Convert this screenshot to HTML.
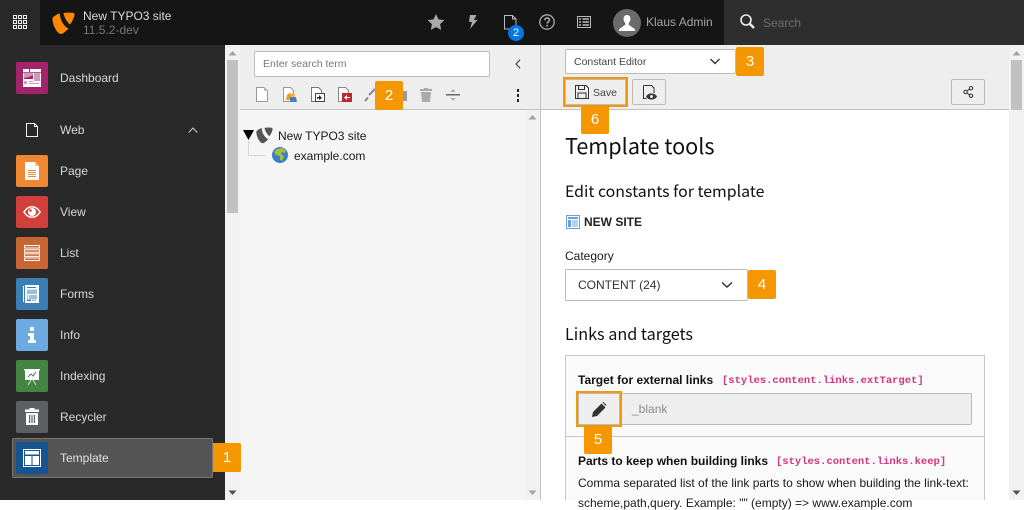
<!DOCTYPE html>
<html><head><meta charset="utf-8"><style>
*{box-sizing:border-box}
html,body{margin:0;padding:0;width:1024px;height:500px;overflow:hidden;background:#fff;font-family:"Liberation Sans",sans-serif;font-size:12px;color:#1a1a1a}
.a{position:absolute}
.t{position:absolute;white-space:nowrap;line-height:14px}
.ic{position:absolute;width:32px;height:32px;border-radius:2px}
.m{position:absolute;left:60px;color:#d8d8d8;font-size:12px;line-height:14px;white-space:nowrap}
.n{position:absolute;width:28px;height:29px;background:#f59700;color:#fff;font-size:15px;line-height:29px;text-align:center;border-radius:2px;z-index:5}
svg{position:absolute;overflow:visible}
.btn{position:absolute;background:#eee;border:1px solid #bbb;border-radius:2px}
.mono{font-family:"Liberation Mono",monospace;font-weight:bold;font-size:10.5px;color:#d63384;white-space:nowrap;position:absolute;line-height:12px}
.b{font-weight:bold}
.h{font-family:'Noto Sans CJK JP',sans-serif;color:#111}
</style></head><body>

<!-- top bar -->
<div class="a" style="left:0;top:0;width:1024px;height:45px;background:#151515"></div>
<div class="a" style="left:0;top:0;width:40px;height:45px;background:#292929"></div>
<svg style="left:13px;top:15px" width="14" height="14" fill="none" stroke="#eee" stroke-width="1"><path d="M.5.500h3v3h-3zM5.500.5h3v3h-3zM10.500.5h3v3h-3zM.5 5.500h3v3h-3zM5.500 5.500h3v3h-3zM10.500 5.500h3v3h-3zM.5 10.500h3v3h-3zM5.500 10.500h3v3h-3zM10.500 10.500h3v3h-3z"/></svg>
<svg style="left:52px;top:12px" width="23" height="23" viewBox="0 0 23 23"><path d="M.5 6C2 4 5 2 8 1.500 7.500 6 11 14 16.500 16.500 14 19 11 22 9 22 5 22 0 12 .5 6z" fill="#f80"/><path d="M11.500 1C15 .5 19 .5 22 1l.5 2C22 6 20 10 18 12.500 15 10 12 5 11.500 1z" fill="#f80"/></svg>
<div class="t" style="left:83px;top:9px;color:#dcdcdc">New TYPO3 site</div>
<div class="t" style="left:83px;top:23px;color:#777">11.5.2-dev</div>

<svg style="left:427px;top:13px" width="18" height="18" viewBox="0 0 18 18"><path d="M9 1l2.500 5.400 5.900.7-4.300 4 1.100 5.800L9 14.100l-5.200 2.800 1.100-5.800-4.300-4 5.900-.7z" fill="#aaa"/></svg>
<svg style="left:467px;top:14px" width="12" height="16" viewBox="0 0 12 16"><path d="M3 1h6.500L7 6h3.500L3 15l2-7H2z" fill="#aaa"/></svg>
<svg style="left:504px;top:15px" width="13" height="15" fill="none" stroke="#bbb"><path d="M.5.500h8l3.500 3.500v10H.5zM8.500.5v3.500h3.500"/></svg>
<div class="a" style="left:508px;top:25px;width:16px;height:16px;border-radius:8px;background:#0078e6;color:#fff;font-size:11px;line-height:16px;text-align:center">2</div>
<svg style="left:539px;top:14px" width="16" height="16" viewBox="0 0 16 16" fill="none" stroke="#aaa" stroke-width="1.300"><circle cx="8" cy="8" r="7.200"/><path d="M5.800 6.200c0-3 4.600-3 4.600-.2 0 1.700-2.200 1.800-2.200 3.500" stroke-width="1.600"/><path d="M8.200 10.800v1.700" stroke-width="1.800"/></svg>
<svg style="left:577px;top:16px" width="14" height="12" fill="none" stroke="#bbb"><path d="M.5.500h13v11H.5z"/><path d="M2 3h2M5.500 3H12M2 6h2M5.500 6H12M2 9h2M5.500 9H12" stroke-width="1.500"/></svg>
<svg style="left:613px;top:9px" width="28" height="28" viewBox="0 0 28 28"><circle cx="14" cy="14" r="14" fill="#6b6b6b"/><path d="M14 6c-2.500 0-3.600 1.800-3.400 4.300.1 1.600.8 3 1.700 3.800v1.700L6 20.200V22h16v-1.800l-6.300-4.400v-1.700c.9-.8 1.600-2.200 1.700-3.800C17.600 7.800 16.500 6 14 6z" fill="#fff"/></svg>
<div class="t" style="left:646px;top:15px;color:#a5a5a5">Klaus Admin</div>
<div class="a" style="left:724px;top:0;width:300px;height:45px;background:#2e2e2e"></div>
<svg style="left:740px;top:14px" width="15" height="15" fill="none" stroke="#eee"><circle cx="6" cy="6" r="5" stroke-width="1.600"/><path d="M9.500 9.500l4.500 4.500" stroke-width="2.400"/></svg>
<div class="t" style="left:763px;top:16px;color:#6f6f6f">Search</div>

<!-- sidebar -->
<div class="a" style="left:0;top:45px;width:225px;height:455px;background:#292929"></div>
<div class="a" style="left:225px;top:45px;width:15px;height:455px;background:#f1f1f1"></div>
<div class="a" style="left:227px;top:60px;width:11px;height:153px;background:#c1c1c1"></div>
<svg style="left:228px;top:51px" width="9" height="5"><path d="M4.500 0L8.500 4.500H.5z" fill="#a3a3a3"/></svg>
<svg style="left:228px;top:490px" width="9" height="5"><path d="M4.500 5L8.500 .5H.5z" fill="#505050"/></svg>

<div class="ic" style="left:16px;top:62px;background:#a3246a"></div>
<svg style="left:23px;top:69px" width="18" height="18"><path d="M0 0h18v18H0z" fill="#fff"/><path d="M1 4h9v6H1zM11 4h6v8h-6zM1 12h3v3H1zM6 12h4v1H6zM6 14h10v1H6z" fill="#d29ab9"/><path d="M6 0h1v3H6zM0 3h18v.7H0zM1 9l5-1 4-2v4H1z" fill="#a3246a"/></svg>
<div class="m" style="top:71px">Dashboard</div>

<svg style="left:26px;top:123px" width="12" height="14" fill="none" stroke="#f0f0f0"><path d="M.5.500h8l3 3v10H.5zM8.500.5v3h3"/></svg>
<div class="m" style="top:123px">Web</div>
<svg style="left:188px;top:127px" width="10" height="6" fill="none" stroke="#c8c8c8" stroke-width="1.100"><path d="M.7 5.500L5 1l4.300 4.500"/></svg>

<div class="ic" style="left:16px;top:155px;background:#f08833"></div>
<svg style="left:25px;top:162px" width="14" height="18"><path d="M0 0h10l4 4v14H0z" fill="#fff"/><path d="M10 0l4 4h-4z" fill="#f8c49a"/><path d="M3 8h8v1H3zM3 10h8v1H3zM3 12h8v1H3zM3 14h8v1H3z" fill="#f08833"/></svg>
<div class="m" style="top:164px">Page</div>

<div class="ic" style="left:16px;top:196px;background:#d1403a"></div>
<svg style="left:23px;top:206px" width="18" height="12"><path d="M0 6C3 1.500 6 0 9 0s6 1.500 9 6c-3 4.500-6 6-9 6S3 10.500 0 6z" fill="#fff"/><path d="M1.800 6C4 3 6 1.500 9 1.500S14 3 16.200 6C14 9 12 10.500 9 10.500S4 9 1.800 6z" fill="#d1403a"/><circle cx="9" cy="6" r="4" fill="#fff"/><circle cx="7.500" cy="4.500" r="1.300" fill="#d1403a"/></svg>
<div class="m" style="top:205px">View</div>

<div class="ic" style="left:16px;top:237px;background:#c96533"></div>
<svg style="left:24px;top:245px" width="16" height="16" fill="none" stroke="#fff"><path d="M.5.500h15v2.500H.5zM.5 4.700h15v2.500H.5zM.5 8.900h15v2.500H.5zM.5 13h15v2.500H.5z"/></svg>
<div class="m" style="top:246px">List</div>

<div class="ic" style="left:16px;top:278px;background:#3b7fb5"></div>
<svg style="left:23px;top:285px" width="16" height="18"><path d="M0 1h1v16H0zM2 0h14v18H2z" fill="#fff"/><path d="M4 4.500h10V9H4z" fill="#9cc0dc"/><path d="M4 2h9v1H4zM4 10.500h1v1H4zM6 10.500h8v1H6zM4 12.500h1v1H4zM6 12.500h8v1H6z" fill="#3b7fb5"/><path d="M4 14.500h4V16H4z" fill="#3b7fb5"/><path d="M9 14.500h4V16H9z" fill="#9cc0dc"/></svg>
<div class="m" style="top:287px">Forms</div>

<div class="ic" style="left:16px;top:319px;background:#6daae0"></div>
<svg style="left:28px;top:327px" width="8" height="16"><path d="M2 0h4v4H2zM0 6h6v7h2v3H0v-3h2V9H0z" fill="#fff"/></svg>
<div class="m" style="top:328px">Info</div>

<div class="ic" style="left:16px;top:360px;background:#468444"></div>
<svg style="left:24px;top:369px" width="16" height="16"><path d="M0 0h16v1.500H0zM1 1.500h14V11H1z" fill="#fff"/><path d="M4 8l3-3 2 2 3-4" stroke="#468444" fill="none"/><path d="M7 11L4 16M9 11l3 5" stroke="#cfe0ce" fill="none"/></svg>
<div class="m" style="top:369px">Indexing</div>

<div class="ic" style="left:16px;top:401px;background:#5a6063"></div>
<svg style="left:25px;top:408px" width="14" height="17"><path d="M4.500 0h5v1.500H14V4H0V1.500h4.500zM1 5h12v12H1z" fill="#fff"/><path d="M4 7h1.200v8H4zM6.400 7h1.200v8H6.400zM8.800 7H10v8H8.800z" fill="#5a6063"/></svg>
<div class="m" style="top:410px">Recycler</div>

<div class="a" style="left:12px;top:438px;width:201px;height:40px;background:#555;border:1px solid #777;border-radius:2px"></div>
<div class="ic" style="left:16px;top:442px;background:#145591"></div>
<svg style="left:23px;top:449px" width="18" height="18" fill="none" stroke="#fff"><path d="M.5.500h17v17H.5z"/><path d="M2 2h14v3.500H2zM2 7h6.500v9H2zM9.500 7H16v9H9.500z" fill="#fff" stroke="none"/></svg>
<div class="m" style="top:451px;color:#e0e0e0">Template</div>
<div class="n" style="left:213px;top:443px;border-radius:0 2px 2px 0">1</div>

<!-- tree panel -->
<div class="a" style="left:240px;top:45px;width:300px;height:65px;background:#eee;border-bottom:1px solid #c3c3c3"></div>
<div class="a" style="left:240px;top:110px;width:285px;height:390px;background:#f5f5f5"></div>
<div class="a" style="left:525px;top:110px;width:15px;height:390px;background:#f1f1f1"></div>
<div class="a" style="left:540px;top:45px;width:1px;height:455px;background:#c3c3c3"></div>
<svg style="left:528px;top:115px" width="9" height="5"><path d="M4.500 0L8.500 4.500H.5z" fill="#a3a3a3"/></svg>
<svg style="left:528px;top:490px" width="9" height="5"><path d="M4.500 5L8.500 .5H.5z" fill="#a3a3a3"/></svg>
<div class="a" style="left:254px;top:51px;width:236px;height:26px;background:#fff;border:1px solid #bbb;border-radius:2px"></div>
<div class="t" style="left:263px;top:57px;color:#777;font-size:10.5px">Enter search term</div>
<svg style="left:515px;top:59px" width="6" height="10" fill="none" stroke="#444" stroke-width="1.200"><path d="M5 .8L1 5l4 4.200"/></svg>

<svg style="left:256px;top:87px" width="12" height="15"><path d="M.5.500h7.500l3.500 3.500v10.500H.5z" fill="#fff" stroke="#999"/><path d="M8 .5v3.500h3.500z" fill="#bbb"/></svg>
<svg style="left:283px;top:87px" width="15" height="15"><path d="M.5.500h7l3 3v11H.500z" fill="#fff" stroke="#999"/><path d="M3 13l1-5 2-2 2 1 1 6z" fill="#f29a1f"/><path d="M7 10h6l1 5H7z" fill="#4d7fc0"/><circle cx="10" cy="8" r="2" fill="#f2b544"/></svg>
<svg style="left:311px;top:87px" width="14" height="15"><path d="M.5.500h7l3 3v11H.500z" fill="#fff" stroke="#777"/><path d="M4.500 6.500h9v8h-9z" fill="#fff" stroke="#444"/><path d="M6 12v-2h2V8l3 3-3 2v-2z" fill="#222"/></svg>
<svg style="left:338px;top:87px" width="14" height="15"><path d="M.5.500h7l3 3v11H.5z" fill="#fff" stroke="#888"/><path d="M4 6h10v9H4z" fill="#c0272d"/><path d="M12 10v1H9v2L6 10.500 9 8v2z" fill="#fff"/></svg>
<svg style="left:364px;top:88px" width="12" height="14" fill="none" stroke="#888" stroke-width="2"><path d="M1 13l3-3.500M5 7l6-6"/></svg>

<div class="a" style="left:403px;top:91px;width:4px;height:10px;background:#999"></div>
<svg style="left:420px;top:88px" width="12" height="14"><path d="M4 0h4v1h4v2H0V1h4zM1 4h10l-1 10H2z" fill="#aaa"/></svg>
<svg style="left:446px;top:89px" width="14" height="12"><path d="M0 5h14v1.500H0z" fill="#666"/><path d="M7 0l2.500 3h-5zM7 12l2.500-3h-5z" fill="#aaa"/></svg>
<div class="a" style="left:517px;top:89px;width:2px;height:3px;background:#222"></div>
<div class="a" style="left:517px;top:94px;width:2px;height:3px;background:#222"></div>
<div class="a" style="left:517px;top:99px;width:2px;height:3px;background:#222"></div>
<div class="n" style="left:375px;top:81px">2</div>

<svg style="left:243px;top:130px" width="11" height="10"><path d="M0 0h11L5.500 10z" fill="#000"/></svg>
<svg style="left:248px;top:141px" width="18" height="15" fill="none" stroke="#d6d6d6"><path d="M.5 0v14.500H18"/></svg>
<svg style="left:256px;top:127px" width="17" height="17" viewBox="0 0 23 23"><path d="M.5 6C2 4 5 2 8 1.500 7.500 6 11 14 16.500 16.500 14 19 11 22 9 22 5 22 0 12 .5 6z" fill="#555"/><path d="M11.500 1C15 .5 19 .5 22 1l.5 2C22 6 20 10 18 12.500 15 10 12 5 11.500 1z" fill="#555"/></svg>
<div class="t" style="left:278px;top:129px;color:#1a1a1a">New TYPO3 site</div>
<svg style="left:272px;top:147px" width="16" height="16"><circle cx="8" cy="8" r="8" fill="#3d7fc7"/><path d="M5 2l6-1 3 3-1 2-3-1-1 2 3 2-2 5-2-1V9L4 8 2 5z" fill="#a7bd3f"/></svg>
<div class="t" style="left:294px;top:149px;color:#1a1a1a">example.com</div>

<!-- right panel -->
<div class="a" style="left:541px;top:45px;width:468px;height:65px;background:#eee;border-bottom:1px solid #c3c3c3"></div>
<div class="a" style="left:1009px;top:45px;width:15px;height:455px;background:#f1f1f1"></div>
<div class="a" style="left:1011px;top:60px;width:11px;height:50px;background:#c1c1c1"></div>
<svg style="left:1012px;top:51px" width="9" height="5"><path d="M4.500 0L8.500 4.500H.5z" fill="#a3a3a3"/></svg>
<svg style="left:1012px;top:490px" width="9" height="5"><path d="M4.500 5L8.500 .5H.5z" fill="#505050"/></svg>

<div class="a" style="left:565px;top:49px;width:171px;height:25px;background:#fff;border:1px solid #bbb;border-radius:2px"></div>
<div class="t" style="left:574px;top:55px;color:#444;font-size:10.5px">Constant Editor</div>
<svg style="left:710px;top:58px" width="10" height="7" fill="none" stroke="#333" stroke-width="1.400"><path d="M.5 1L5 5.500 9.500 1"/></svg>
<div class="n" style="left:736px;top:47px">3</div>

<div class="btn" style="left:565px;top:79px;width:61px;height:26px;border-radius:0;box-shadow:0 0 0 2px #f59700"></div>
<svg style="left:575px;top:85px" width="14" height="14" fill="none" stroke="#333"><path d="M.5.500h10.500l2.500 2.500v10.500H.5zM3.500.5v4h6v-4M3 13.500V8h8v5.500"/></svg>
<div class="t" style="left:593px;top:86px;color:#444;font-size:10.500px">Save</div>
<div class="n" style="left:581px;top:105px">6</div>
<div class="btn" style="left:632px;top:79px;width:34px;height:26px"></div>
<svg style="left:643px;top:85px" width="14" height="15"><path d="M.5.500h8l2.500 2.500v5M.5.500v13h3" fill="none" stroke="#333"/><path d="M3 11.500c1.500-2.500 3.500-3 5.500-3s4 .5 5.500 3c-1.500 2.500-3.500 3-5.500 3s-4-.5-5.500-3z" fill="#333"/><circle cx="8.500" cy="11.500" r="1.500" fill="#eee"/></svg>
<div class="btn" style="left:951px;top:79px;width:34px;height:26px"></div>
<svg style="left:963px;top:86px" width="11" height="12" fill="none" stroke="#333"><circle cx="2.500" cy="6" r="1.700"/><circle cx="8" cy="2.200" r="1.700"/><circle cx="8" cy="9.800" r="1.700"/><path d="M4 5L6.500 3.200M4 7l2.500 1.800"/></svg>

<div class="t h" style="left:565px;top:132px;font-size:21.600px;line-height:28px">Template tools</div>
<div class="t h" style="left:565px;top:181px;font-size:15.900px;line-height:20px">Edit constants for template</div>
<svg style="left:566px;top:215px" width="14" height="14"><path d="M.5.500h13v13H.5z" fill="#fff" stroke="#6a9fe0"/><path d="M2 2h10v2H2zM2 5h3v7H2z" fill="#6a9fe0"/><path d="M6 5h6v7H6z" fill="#b0d4f8"/></svg>
<div class="t b" style="left:584px;top:215px;color:#222">NEW SITE</div>
<div class="t" style="left:565px;top:249px;color:#1a1a1a">Category</div>
<div class="a" style="left:565px;top:269px;width:183px;height:32px;background:#fff;border:1px solid #bbb;border-radius:2px"></div>
<div class="t" style="left:578px;top:278px;color:#333">CONTENT (24)</div>
<svg style="left:721px;top:281px" width="12" height="8" fill="none" stroke="#333" stroke-width="1.500"><path d="M1 1.500L6 6l5-4.500"/></svg>
<div class="n" style="left:748px;top:270px">4</div>
<div class="t h" style="left:565px;top:323px;font-size:16.200px;line-height:20px">Links and targets</div>

<div class="a" style="left:565px;top:355px;width:420px;height:145px;background:#fafafa;border:1px solid #c8c8c8;border-bottom:0"></div>
<div class="t b" style="left:578px;top:373px;color:#111">Target for external links</div>
<div class="mono" style="left:722px;top:375px">[styles.content.links.extTarget]</div>
<div class="a" style="left:620px;top:393px;width:352px;height:32px;background:#eee;border:1px solid #bbb;border-radius:0 2px 2px 0"></div>
<div class="btn" style="left:578px;top:393px;width:42px;height:32px;border-radius:0;box-shadow:0 0 0 2px #f59700"></div>
<svg style="left:592px;top:402px" width="15" height="15"><path d="M0 15l1-5L9.500 1.500l4 4L5 14zM10.500.5l1-.5 3 3-.5 1z" fill="#333"/></svg>
<div class="t" style="left:632px;top:402px;color:#8a8a8a">_blank</div>
<div class="a" style="left:566px;top:436px;width:418px;height:1px;background:#c8c8c8"></div>
<div class="n" style="left:584px;top:425px">5</div>
<div class="t b" style="left:578px;top:454px;color:#111">Parts to keep when building links</div>
<div class="mono" style="left:776px;top:456px">[styles.content.links.keep]</div>
<div class="t" style="left:578px;top:476px;color:#1a1a1a">Comma separated list of the link parts to show when building the link-text:</div>
<div class="t" style="left:578px;top:496px;color:#1a1a1a">scheme,path,query. Example: "" (empty) =&gt; www.example.com</div>

</body></html>
